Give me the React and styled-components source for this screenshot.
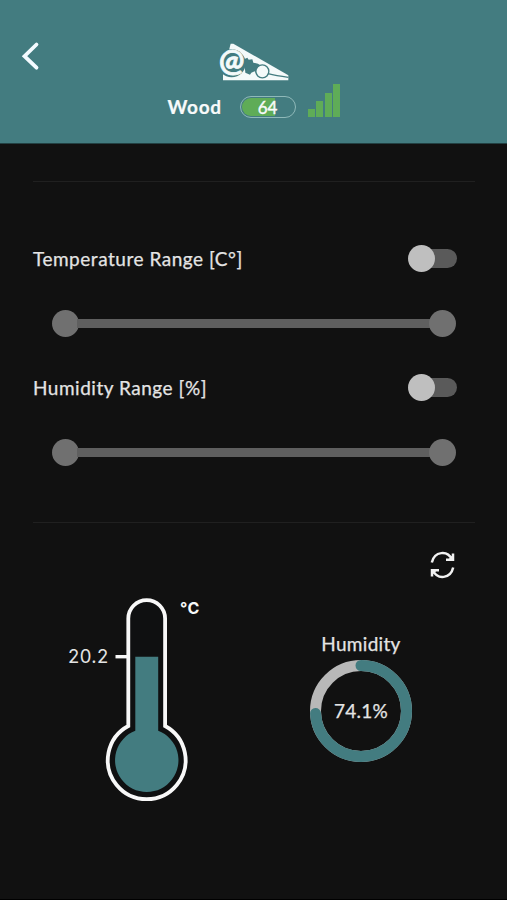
import React from "react";
import styled, { createGlobalStyle, ThemeProvider } from "styled-components";

const theme = {
  colors: {
    primary: "#437c80",
    background: "#111111",
    text: "#e4e4e4",
    white: "#f8fafa",
    green: "#5fac57",
    line: "#202020",
    track: "#5f5f5f",
    thumb: "#707070",
    knob: "#bfbfbf",
  },
};

const GlobalStyle = createGlobalStyle`
  body {
    margin: 0;
    background-color: #111111;
  }
`;

const Screen = styled.div`
  box-sizing: border-box;
  width: 507px;
  height: 900px;
  overflow: hidden;
  background-color: ${(props) => props.theme.colors.background};
  border-bottom: 1px solid #000;
  color: ${(props) => props.theme.colors.text};
  font-family: Lato, "Open Sans", sans-serif;
  font-size: 19px;
`;

const Header = styled.header`
  display: grid;
  grid-template-columns: 60px 1fr 59px;
  box-sizing: border-box;
  height: 144px;
  background-color: ${(props) => props.theme.colors.primary};
  border-bottom: 1px solid #234143;
`;

const BackButton = styled.button`
  align-self: start;
  width: 30px;
  height: 36px;
  margin: 38px 0 0 16px;
  padding: 0;
  border: none;
  background: none;
  svg {
    display: block;
  }
`;

const Device = styled.div`
  display: flex;
  flex-direction: column;
  align-items: center;
  padding-top: 42px;
`;

const Status = styled.div`
  display: flex;
  align-items: flex-end;
  height: 34px;
  margin-top: 1px;
`;

const DeviceName = styled.span`
  width: 72px;
  margin-bottom: -1px;
  color: ${(props) => props.theme.colors.white};
  font-weight: 700;
  font-size: 19px;
  line-height: 22px;
  letter-spacing: 0.7px;
  -webkit-text-stroke: 0.2px;
`;

const Battery = styled.div`
  box-sizing: border-box;
  width: 56px;
  height: 22px;
  margin-bottom: -1px;
  padding: 1px;
  border: 1.5px solid #8fb9b9;
  border-radius: 11px;
`;

const BatteryLevel = styled.div`
  height: 100%;
  border-radius: 9px;
  background: linear-gradient(
    to right,
    ${(props) => props.theme.colors.green} ${(props) => props.$level}%,
    transparent ${(props) => props.$level}%
  );
  color: ${(props) => props.theme.colors.white};
  font-size: 17px;
  line-height: 19px;
  text-align: center;
  -webkit-text-stroke: 0.4px;
`;

const Signal = styled.div`
  display: flex;
  align-items: flex-end;
  gap: 1.6px;
  margin-left: 12px;
`;

const Bar = styled.span`
  width: 7px;
  height: ${(props) => props.$height}px;
  background-color: ${(props) => props.theme.colors.green};
`;

const Content = styled.main`
  padding: 37px 32px 0 33px;
`;

const Divider = styled.hr`
  height: 1px;
  margin: 0;
  border: none;
  background-color: ${(props) => props.theme.colors.line};
`;

const Ranges = styled.section`
  display: flex;
  flex-direction: column;
  gap: 37px;
  padding: 63px 18px 56px 0;
`;

const Range = styled.div`
  display: flex;
  flex-direction: column;
  gap: 38px;
`;

const RangeHead = styled.div`
  display: flex;
  justify-content: space-between;
  align-items: center;
  height: 27px;
`;

const Label = styled.span`
  line-height: 24px;
  white-space: nowrap;
  letter-spacing: ${(props) => props.$spacing || 0}px;
  -webkit-text-stroke: 0.25px;
`;

const Toggle = styled.div`
  display: flex;
  align-items: center;
  width: 46px;
  height: 19px;
  border-radius: 10px;
  background-color: #5a5a5a;
`;

const Knob = styled.span`
  flex: none;
  width: 27px;
  height: 27px;
  margin-left: -3px;
  border-radius: 50%;
  background-color: ${(props) => props.theme.colors.knob};
`;

const Slider = styled.div`
  display: flex;
  align-items: center;
  height: 27px;
  margin: 0 1px 0 19px;
`;

const Track = styled.span`
  flex: 1;
  height: 9px;
  margin: 0 -2px;
  background-color: ${(props) => props.theme.colors.track};
`;

const Thumb = styled.span`
  width: 27px;
  height: 27px;
  border-radius: 50%;
  background-color: ${(props) => props.theme.colors.thumb};
`;

const Refresh = styled.div`
  display: flex;
  justify-content: flex-end;
  padding: 27px 20px 0 0;
`;

const Gauges = styled.section`
  display: flex;
  align-items: flex-start;
  margin-top: 15px;
`;

const Reading = styled.span`
  width: 47px;
  margin: 49px 0 0 35px;
  font-family: Inter, sans-serif;
  font-size: 18.5px;
  line-height: 24px;
  letter-spacing: 0.4px;
`;

const Unit = styled.span`
  width: 30px;
  margin: 2px 0 0 -8px;
  color: ${(props) => props.theme.colors.white};
  font-family: Inter, sans-serif;
  font-weight: 700;
  font-size: 16px;
  line-height: 22px;
  letter-spacing: 0.3px;
`;

const Humidity = styled.div`
  display: flex;
  flex-direction: column;
  align-items: center;
  width: 104px;
  margin: 37px 0 0 99px;
`;

const Ring = styled.div`
  display: grid;
  place-items: center;
  margin-top: 3px;
  > * {
    grid-area: 1 / 1;
  }
`;

const ClothespinLogo = () => (
  <svg width="72" height="40" viewBox="0 0 216 120">
    <path d="M38 5H46L211 100V115H15V94Z" fill="#f4fafa" />
    <path
      d="M78 52 88 47 92 53 103 52 106 62 120 65 130 72 124 90 114 94 110 88 100 92 96 98 82 92Z"
      fill="#437c80"
    />
    <path d="M150 95Q174 101 211 106" fill="none" stroke="#437c80" strokeWidth="4" />
    <circle cx="41" cy="64" r="42" fill="#437c80" />
    <circle cx="133" cy="88" r="19.5" fill="#f4fafa" stroke="#437c80" strokeWidth="4" />
    <text
      x="41"
      y="86"
      textAnchor="middle"
      fontFamily="Lato, sans-serif"
      fontWeight="700"
      fontSize="90"
      fill="#f4fafa"
      stroke="#f4fafa"
      strokeWidth="2.5"
    >
      @
    </text>
  </svg>
);

const SyncIcon = () => (
  <svg width="25" height="30" viewBox="0 0 25 30" fill="none" stroke="#f2f2f2" strokeWidth="2.5">
    <path d="M1.8 12.5C4.5 1 17.5 0 22 9.5M23 3.5V9.8H16" />
    <path d="M23.2 17.5C20.5 29 7.5 30 3 20.5M2 26.5V20.2H9" />
    <path d="M18 9.8 23 5V9.8ZM7 20.2 2 25V20.2Z" fill="#f2f2f2" stroke="none" />
  </svg>
);

const Thermometer = () => (
  <svg width="100" height="210" viewBox="115 595 100 210">
    <path
      d="M128.3 726V618.5a18.4 18.4 0 0 1 36.8 0V726a38.9 38.9 0 1 1-36.8 0Z"
      fill="#0f1011"
      stroke="#f8f8f8"
      strokeWidth="3.8"
    />
    <path d="M115.5 656.7H128" stroke="#f8f8f8" strokeWidth="3.4" />
    <path d="M135.3 656.7h22.9v74a31.7 31.7 0 1 1-22.9 0Z" fill="#437c80" />
  </svg>
);

const ThermometerBox = styled.div`
  width: 73px;
  height: 210px;
  svg {
    display: block;
    overflow: visible;
  }
`;

const HumidityRing = ({ value }) => (
  <svg width="104" height="104" viewBox="0 0 104 104" fill="none" strokeWidth="11">
    <circle cx="52" cy="52" r="45.5" stroke="#b8b8b8" />
    <circle
      cx="52"
      cy="52"
      r="45.5"
      stroke="#437c80"
      strokeLinecap="round"
      pathLength="100"
      strokeDasharray={`${value} 100`}
      transform="rotate(-90 52 52)"
    />
  </svg>
);

const RangeControl = ({ label }) => (
  <Range>
    <RangeHead>
      <Label $spacing={0.52}>{label}</Label>
      <Toggle>
        <Knob />
      </Toggle>
    </RangeHead>
    <Slider>
      <Thumb />
      <Track />
      <Thumb />
    </Slider>
  </Range>
);

const App = () => {
  return (
    <ThemeProvider theme={theme}>
      <GlobalStyle />
      <Screen>
        <Header>
          <BackButton aria-label="Back">
            <svg width="30" height="36" viewBox="0 0 30 36">
              <path
                d="M20.5 6.5 8.5 18.2l12 11.5"
                fill="none"
                stroke="#f4fbff"
                strokeWidth="3.8"
                strokeLinecap="round"
              />
            </svg>
          </BackButton>
          <Device>
            <ClothespinLogo />
            <Status>
              <DeviceName>Wood</DeviceName>
              <Battery>
                <BatteryLevel $level={64}>64</BatteryLevel>
              </Battery>
              <Signal>
                <Bar $height={8} />
                <Bar $height={16} />
                <Bar $height={24} />
                <Bar $height={33} />
              </Signal>
            </Status>
          </Device>
        </Header>
        <Content>
          <Divider />
          <Ranges>
            <RangeControl label="Temperature Range [C°]" />
            <RangeControl label="Humidity Range [%]" />
          </Ranges>
          <Divider />
          <Refresh>
            <SyncIcon />
          </Refresh>
          <Gauges>
            <Reading>20.2</Reading>
            <ThermometerBox>
              <Thermometer />
            </ThermometerBox>
            <Unit>°C</Unit>
            <Humidity>
              <Label $spacing={0.3}>Humidity</Label>
              <Ring>
                <HumidityRing value={74.1} />
                <Label $spacing={0.2}>74.1%</Label>
              </Ring>
            </Humidity>
          </Gauges>
        </Content>
      </Screen>
    </ThemeProvider>
  );
};

export default App;
